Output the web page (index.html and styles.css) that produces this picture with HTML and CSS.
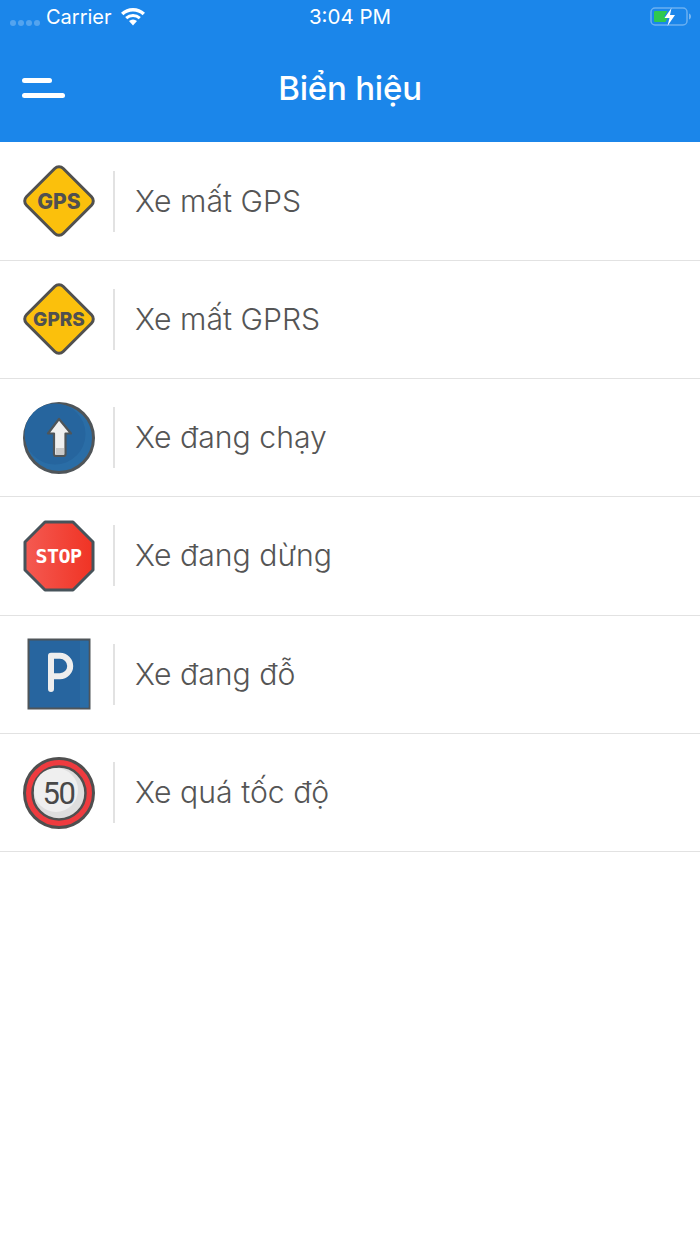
FILE: index.html
```html
<!DOCTYPE html>
<html lang="vi">
<head>
	<meta charset="UTF-8">
	<title>Biển hiệu</title>
	<link rel="stylesheet" href="styles.css">
</head>
<body>
	<header class="top">
		<div class="status">
			<div class="status-left">
				<div class="dots"><i></i><i></i><i></i><i></i></div>
				<span class="carrier">Carrier</span>
				<svg class="wifi" width="26" height="19" viewBox="0 0 26 19">
					<path d="M13 18.500 9 14a6 6 0 0 1 8 0z" fill="#fff"/>
					<path d="M7.200 12.300a8.800 8.800 0 0 1 11.600 0l2-2.200a11.700 11.700 0 0 0-15.600 0z" fill="#fff"/>
					<path d="M3.400 8.200a14.400 14.400 0 0 1 19.200 0l2.400-2.500A17.700 17.700 0 0 0 1 5.700z" fill="#fff"/>
				</svg>
			</div>
			<span class="time">3:04 PM</span>
			<svg class="battery" width="42" height="20" viewBox="0 0 42 20">
				<rect x="1" y="1" width="36" height="17" rx="4" fill="none" stroke="#fff" stroke-opacity=".35" stroke-width="1.500"/>
				<path d="M39 6.500c1.500.4 2 1.700 2 3s-.5 2.600-2 3z" fill="#fff" fill-opacity=".4"/>
				<path d="M5 4h12.500l-3.500 6h4l-2.500 5H5a1.500 1.500 0 0 1-1-1V5a1.500 1.500 0 0 1 1-1z" fill="#2fc84f"/>
				<path d="M21.500 1 14.500 11h5l-2 8L25 8h-5z" fill="#fff"/>
			</svg>
		</div>
		<div class="navbar">
			<div class="menu"><span class="menu-short"></span><span class="menu-long"></span></div>
			<h1 class="title">Biển hiệu</h1>
		</div>
	</header>

	<ul class="signs">
		<li class="sign">
			<svg class="sign-icon" viewBox="0 0 72 72">
				<rect x="10" y="10" width="52" height="52" rx="6" transform="rotate(45 36 36)" fill="#fbc00c" stroke="#505050" stroke-width="3"/>
				<text x="36" y="43.500" class="txt-gps">GPS</text>
			</svg>
			<span class="sign-name">Xe mất GPS</span>
		</li>
		<li class="sign">
			<svg class="sign-icon" viewBox="0 0 72 72">
				<rect x="10" y="10" width="52" height="52" rx="6" transform="rotate(45 36 36)" fill="#fbc00c" stroke="#505050" stroke-width="3"/>
				<text x="36" y="43" class="txt-gprs">GPRS</text>
			</svg>
			<span class="sign-name">Xe mất GPRS</span>
		</li>
		<li class="sign">
			<svg class="sign-icon" viewBox="0 0 72 72">
				<circle cx="36" cy="36" r="34.500" fill="#2a6da6" stroke="#4f5559" stroke-width="3"/>
				<circle cx="32" cy="32" r="30.500" fill="#26659e"/>
				<path d="M36 17 48 31.500H42.500V52a2 2 0 0 1-2 2H33a2 2 0 0 1-2-2V31.500H25z" fill="#f0f0f0" stroke="#4f5559" stroke-width="2.200" stroke-linejoin="round"/>
				<rect x="33" y="46" width="8" height="7" fill="#c9c9c9"/>
			</svg>
			<span class="sign-name">Xe đang chạy</span>
		</li>
		<li class="sign">
			<svg class="sign-icon" viewBox="0 0 72 72">
				<defs>
					<linearGradient id="stopfill" x1="0" y1="0" x2="1" y2="0">
						<stop offset="0" stop-color="#f45a52"/>
						<stop offset="1" stop-color="#f03324"/>
					</linearGradient>
				</defs>
				<path d="M22 2H50L70 22V50L50 70H22L2 50V22z" fill="url(#stopfill)" stroke="#47535a" stroke-width="3" stroke-linejoin="round"/>
				<text x="35.500" y="43" class="txt-stop">STOP</text>
			</svg>
			<span class="sign-name">Xe đang dừng</span>
		</li>
		<li class="sign">
			<svg class="sign-icon" viewBox="0 0 72 72">
				<rect x="5.500" y="1.500" width="61" height="69" fill="#27659f" stroke="#4f5559" stroke-width="2"/>
				<rect x="57" y="3" width="8.500" height="66.500" fill="#2a6da6"/>
				<path d="M28 51V17.800H37A10.200 10.200 0 0 1 37 38.200H28" fill="none" stroke="#eee" stroke-width="6" stroke-linecap="round" stroke-linejoin="round"/>
			</svg>
			<span class="sign-name">Xe đang đỗ</span>
		</li>
		<li class="sign">
			<svg class="sign-icon" viewBox="0 0 72 72">
				<circle cx="36" cy="36" r="34.500" fill="#ee3b3f" stroke="#4f4f4f" stroke-width="3"/>
				<circle cx="36" cy="36" r="26.500" fill="#dedede" stroke="#4f4f4f" stroke-width="2.500"/>
				<circle cx="33" cy="33" r="22" fill="#efefef"/>
				<text x="35.500" y="47" class="txt-limit">50</text>
			</svg>
			<span class="sign-name">Xe quá tốc độ</span>
		</li>
	</ul>
</body>
</html>
```

FILE: styles.css
```css
*{margin: 0; padding: 0; box-sizing: border-box;}
body{width: 700px; height: 1244px; background: #fff; font-family: Inter, "Noto Sans", sans-serif; overflow: hidden;}

.top{height: 142.450px; background: #1b86ea; color: #fff;}
.status{display: flex; align-items: center; justify-content: space-between; height: 36px; padding: 0 8px 3px 10px; position: relative;}
.status-left{display: flex; align-items: center;}
.dots{display: flex; gap: 2px; margin-top: 12px; margin-right: 6px;}
.dots i{display: block; width: 6px; height: 6px; border-radius: 50%; background: #fff; opacity: .25;}
.carrier{font-size: 20px;}
.wifi{margin-left: 8px;}
.time{position: absolute; left: 0; right: 0; text-align: center; font-size: 20.500px;}
.battery{margin-top: 0;}

.navbar{display: flex; align-items: center; justify-content: center; height: 106px; position: relative; padding-bottom: 2px;}
.menu{position: absolute; left: 22px; top: 42px; display: flex; flex-direction: column; gap: 10px;}
.menu span{display: block; height: 5px; border-radius: 3px; background: #fff;}
.menu-short{width: 30px;}
.menu-long{width: 43px;}
.title{font-size: 33px; font-weight: 500; letter-spacing: -.2px;}

.signs{list-style: none;}
.sign{display: flex; align-items: center; height: 118.300px; padding-left: 22.500px; border-bottom: 1px solid #e2e2e2;}
.sign-icon{display: block; width: 72px; height: 72px; flex: none;}
.sign-name{margin-left: 18.500px; padding-left: 20px; height: 61px; line-height: 61px; border-left: 2px solid #e2e2e2; font-size: 30.200px; font-weight: 300; color: #555;}

.sign-icon text{text-anchor: middle; font-family: Inter, "Noto Sans", sans-serif; font-weight: 800;}
.txt-gps{font-size: 21px; fill: #505050;}
.txt-gprs{font-size: 19px; fill: #505050;}
.sign-icon .txt-stop{font-family: "DejaVu Sans Mono", monospace; font-size: 20px; font-weight: 700; fill: #fff; letter-spacing: -.6px;}
.sign-icon .txt-limit{font-family: Roboto, sans-serif; font-size: 31px; font-weight: 400; fill: #484848; letter-spacing: -1.500px;}
```
